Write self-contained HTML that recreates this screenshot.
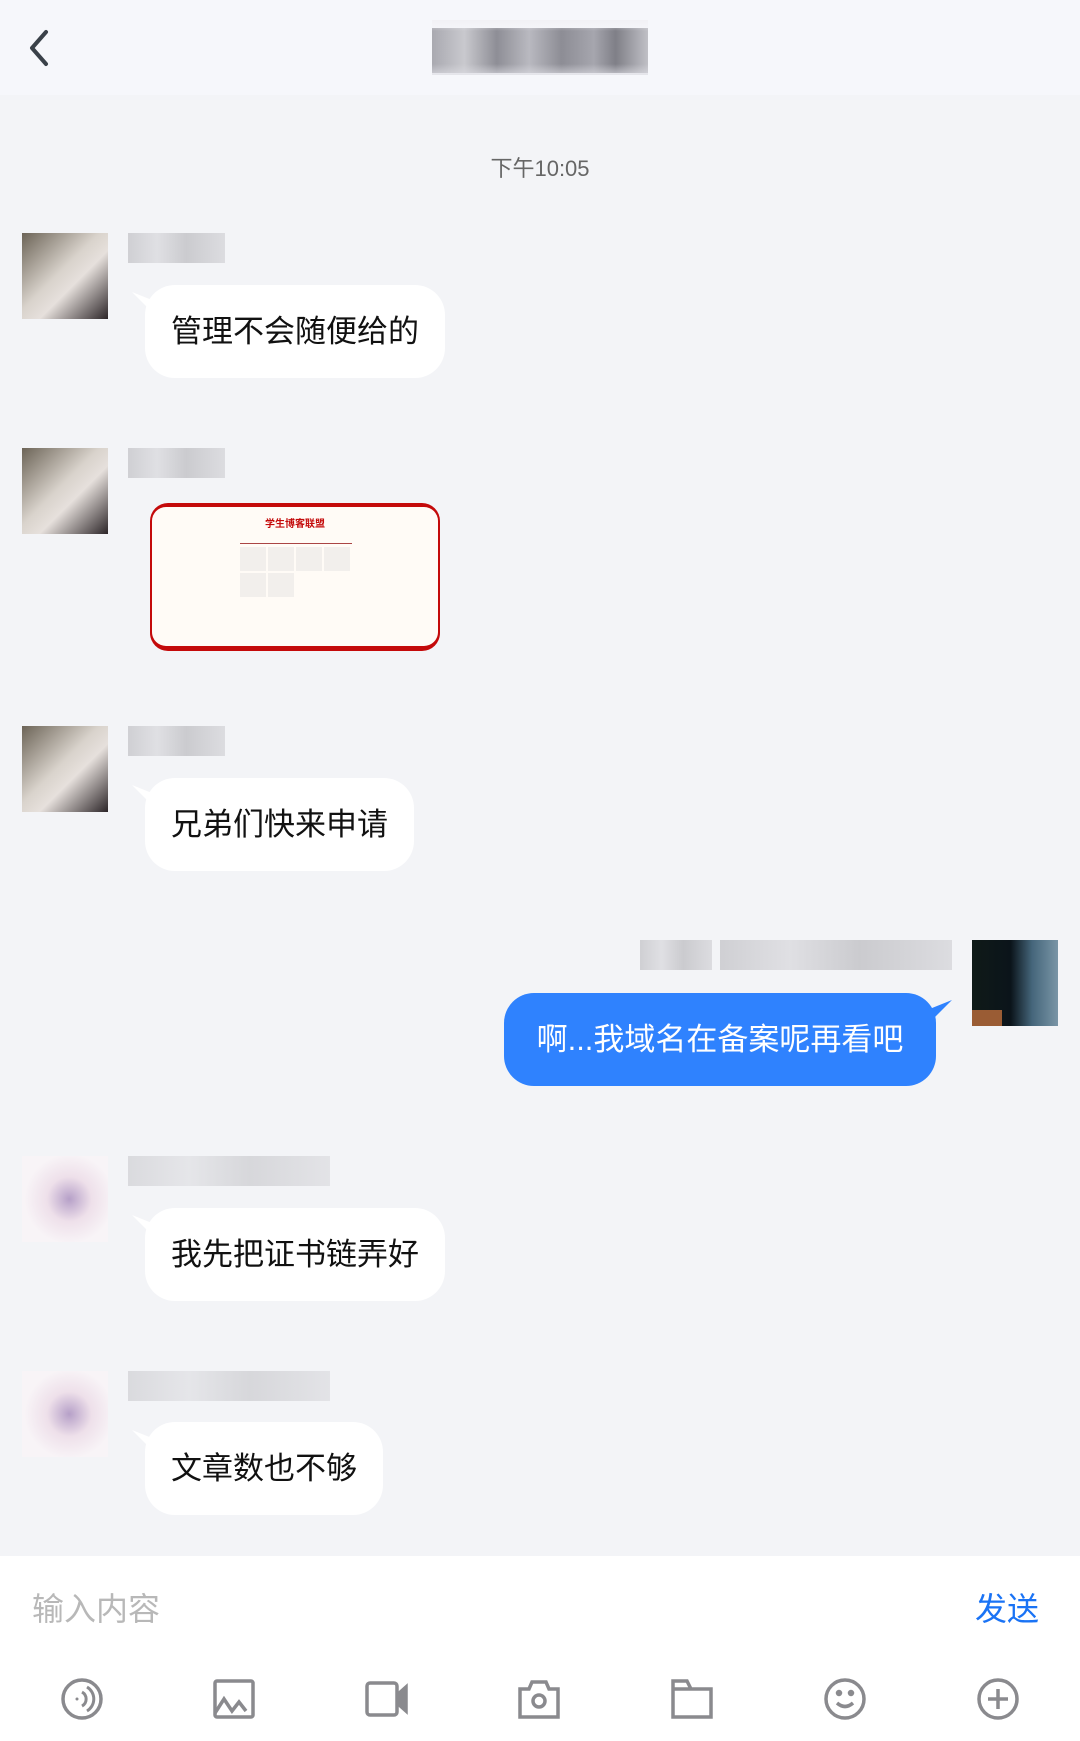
<!DOCTYPE html>
<html><head><meta charset="utf-8"><style>
*{margin:0;padding:0;box-sizing:border-box}
body{width:1080px;height:1741px;background:#f3f4f7;font-family:"Liberation Sans","Noto Sans CJK SC",sans-serif;position:relative;overflow:hidden}
.a{position:absolute}
.hdr{left:0;top:0;width:1080px;height:95px;background:#f6f7fb}
.bub{position:absolute;background:#fff;border-radius:30px;height:93px;font-size:31px;line-height:93px;padding:0 26px;color:#111}
.tailL{position:absolute;width:24px;height:24px;background:#fff}
.av{position:absolute;width:86px;height:86px}
.nm{position:absolute;height:30px;background:linear-gradient(90deg,#c9c9cd,#dcdce0 30%,#c4c4c8 60%,#d8d8dc);opacity:.85}
.ic{position:absolute;top:1677px;width:44px;height:44px}
</style></head><body>
<div class="a hdr"></div>
<svg class="a" style="left:26px;top:28px" width="26" height="40" viewBox="0 0 26 40"><path d="M20 4 L6 20 L20 36" fill="none" stroke="#3a4149" stroke-width="4" stroke-linecap="round" stroke-linejoin="round"/></svg>
<div class="a" style="left:432px;top:28px;width:216px;height:45px;background:linear-gradient(90deg,#a9a9b0,#c9c9ce 15%,#8e8e96 30%,#b9b9c0 45%,#8d8d95 60%,#a6a6ae 75%,#7f7f87 85%,#c0c0c6)"></div>
<div class="a" style="left:432px;top:20px;width:216px;height:55px;background:linear-gradient(#f0eef2,transparent 20%,transparent 80%,#dcdce2);opacity:.7"></div>
<div class="a" style="left:0;top:151px;width:1080px;text-align:center;font-size:22px;color:#666">下午10:05</div>

<div class="av" style="left:22px;top:233px;background:linear-gradient(135deg,#6c6457,#d9d3cc 45%,#e6e0dc 60%,#2c2528)"></div>
<div class="nm" style="left:128px;top:233px;width:97px"></div>
<div class="tailL" style="left:132px;top:292px;clip-path:polygon(0 0,100% 40%,100% 100%)"></div>
<div class="bub" style="left:145px;top:285px">管理不会随便给的</div>

<div class="av" style="left:22px;top:448px;background:linear-gradient(135deg,#6c6457,#d9d3cc 45%,#e6e0dc 60%,#2c2528)"></div>
<div class="nm" style="left:128px;top:448px;width:97px"></div>
<div class="a" style="left:150px;top:503px;width:290px;height:148px;border-radius:18px;background:#c40a0a;padding:4px 2px 5px 2px">
<div style="width:100%;height:100%;background:#fffbf6;border-radius:14px;position:relative">
<div class="a" style="left:0;top:8px;width:100%;text-align:center;font-size:10px;color:#c40a0a;font-weight:bold">学生博客联盟</div>
<div class="a" style="left:88px;top:36px;width:112px;height:1px;background:#a44"></div>
<div class="a" style="left:88px;top:40px;width:112px;height:24px;background:repeating-linear-gradient(90deg,#f2efec 0 26px,#fffbf6 26px 28px)"></div>
<div class="a" style="left:88px;top:66px;width:56px;height:24px;background:repeating-linear-gradient(90deg,#f2efec 0 26px,#fffbf6 26px 28px)"></div>
</div></div>

<div class="av" style="left:22px;top:726px;background:linear-gradient(135deg,#6c6457,#d9d3cc 45%,#e6e0dc 60%,#2c2528)"></div>
<div class="nm" style="left:128px;top:726px;width:97px"></div>
<div class="tailL" style="left:132px;top:785px;clip-path:polygon(0 0,100% 40%,100% 100%)"></div>
<div class="bub" style="left:145px;top:778px">兄弟们快来申请</div>

<div class="av" style="left:972px;top:940px;background:linear-gradient(90deg,#0f1a18,#0b141a 45%,#45667b 70%,#7a95a6);"></div>
<div class="a" style="left:972px;top:1010px;width:30px;height:16px;background:#9a5c34"></div>
<div class="nm" style="left:640px;top:940px;width:72px"></div>
<div class="nm" style="left:720px;top:940px;width:232px"></div>
<div class="a" style="left:928px;top:1000px;width:24px;height:24px;background:#2f82fe;clip-path:polygon(100% 0,0 40%,0 100%)"></div>
<div class="bub" style="left:504px;top:993px;width:432px;background:#2f82fe;color:#fff;text-align:center;padding:0">啊...我域名在备案呢再看吧</div>

<div class="av" style="left:22px;top:1156px;background:radial-gradient(circle at 55% 50%,#b6a0c8,#eee0ea 35%,#f8f4f7 70%)"></div>
<div class="nm" style="left:128px;top:1156px;width:202px;opacity:.6"></div>
<div class="tailL" style="left:132px;top:1215px;clip-path:polygon(0 0,100% 40%,100% 100%)"></div>
<div class="bub" style="left:145px;top:1208px">我先把证书链弄好</div>

<div class="av" style="left:22px;top:1371px;background:radial-gradient(circle at 55% 50%,#b6a0c8,#eee0ea 35%,#f8f4f7 70%)"></div>
<div class="nm" style="left:128px;top:1371px;width:202px;opacity:.6"></div>
<div class="tailL" style="left:132px;top:1430px;clip-path:polygon(0 0,100% 40%,100% 100%)"></div>
<div class="bub" style="left:145px;top:1422px">文章数也不够</div>

<div class="a" style="left:0;top:1556px;width:1080px;height:185px;background:#fff"></div>
<div class="a" style="left:32px;top:1584px;font-size:32px;color:#b8b8b8">输入内容</div>
<div class="a" style="left:975px;top:1584px;font-size:32px;color:#1a73f5">发送</div>

<svg class="ic" style="left:60px" viewBox="0 0 44 44" fill="none" stroke="#8a8a8e" stroke-width="3.5"><circle cx="22" cy="22" r="19"/><path d="M22 15a8 8 0 0 1 0 14M27 10a14 14 0 0 1 0 24" stroke-width="3"/><circle cx="17" cy="22" r="1.5" fill="#8a8a8e" stroke="none"/></svg>
<svg class="ic" style="left:212px" viewBox="0 0 44 44" fill="none" stroke="#8a8a8e" stroke-width="3.5"><rect x="3" y="4" width="38" height="36" rx="2"/><path d="M3 36 L12 22 L20 34 L27 25 L34 34"/></svg>
<svg class="ic" style="left:365px" viewBox="0 0 44 44" fill="none" stroke="#8a8a8e" stroke-width="3.5"><rect x="2" y="6" width="30" height="32" rx="3"/><path d="M32 18 L41 10 V34 L32 26" fill="#8a8a8e"/></svg>
<svg class="ic" style="left:517px" viewBox="0 0 44 44" fill="none" stroke="#8a8a8e" stroke-width="3.5"><path d="M3 12 H12 L15 5 H29 L32 12 H41 V40 H3 Z"/><circle cx="22" cy="24" r="6"/></svg>
<svg class="ic" style="left:670px" viewBox="0 0 44 44" fill="none" stroke="#8a8a8e" stroke-width="3.5"><path d="M3 4 H17 L21 12 H41 V40 H3 Z M3 12 H21"/></svg>
<svg class="ic" style="left:823px" viewBox="0 0 44 44" fill="none" stroke="#8a8a8e" stroke-width="3.5"><circle cx="22" cy="22" r="19"/><path d="M14 26 Q22 33 30 26"/><circle cx="16" cy="16" r="1.5" fill="#8a8a8e"/><circle cx="28" cy="16" r="1.5" fill="#8a8a8e"/></svg>
<svg class="ic" style="left:976px" viewBox="0 0 44 44" fill="none" stroke="#8a8a8e" stroke-width="3.5"><circle cx="22" cy="22" r="19"/><path d="M22 12 V32 M12 22 H32"/></svg>
</body></html>
